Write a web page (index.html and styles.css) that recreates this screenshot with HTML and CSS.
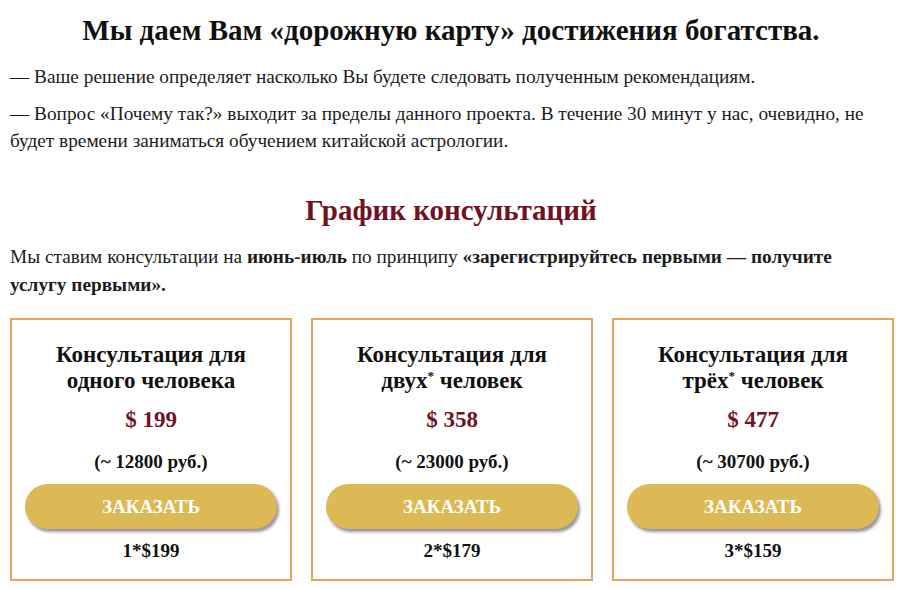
FILE: index.html
```html
<!DOCTYPE html>
<html lang="ru">
<head>
<meta charset="utf-8">
<title>График консультаций</title>
<link rel="stylesheet" href="styles.css">
</head>
<body>
<main class="page">
  <h1 class="main-title">Мы даем Вам «дорожную карту» достижения богатства.</h1>
  <p class="text">— Ваше решение определяет насколько Вы будете следовать полученным рекомендациям.</p>
  <p class="text">— Вопрос «Почему так?» выходит за пределы данного проекта. В течение 30 минут у нас, очевидно, не будет времени заниматься обучением китайской астрологии.</p>

  <h2 class="section-title">График консультаций</h2>
  <p class="text intro">Мы ставим консультации на <b>июнь-июль</b> по принципу <b>«зарегистрируйтесь первыми — получите услугу первыми».</b></p>

  <div class="cards">
    <div class="card">
      <h3 class="card-title">Консультация для одного человека</h3>
      <div class="price">$ 199</div>
      <div class="rub">(~ 12800 руб.)</div>
      <a class="btn" href="#">ЗАКАЗАТЬ</a>
      <div class="per">1*$199</div>
    </div>
    <div class="card">
      <h3 class="card-title">Консультация для двух<sup>*</sup> человек</h3>
      <div class="price">$ 358</div>
      <div class="rub">(~ 23000 руб.)</div>
      <a class="btn" href="#">ЗАКАЗАТЬ</a>
      <div class="per">2*$179</div>
    </div>
    <div class="card">
      <h3 class="card-title">Консультация для трёх<sup>*</sup> человек</h3>
      <div class="price">$ 477</div>
      <div class="rub">(~ 30700 руб.)</div>
      <a class="btn" href="#">ЗАКАЗАТЬ</a>
      <div class="per">3*$159</div>
    </div>
  </div>
</main>
</body>
</html>
```

FILE: styles.css
```css
* { box-sizing: border-box; }
html, body { margin: 0; padding: 0; background: #fff; }
body {
  font-family: "Liberation Serif", "Times New Roman", serif;
  color: #1c1c1c;
}
.page {
  padding: 12px 8px 0 10px;
}
.main-title {
  margin: 0 0 15px;
  text-align: center;
  font-size: 29px;
  line-height: 36px;
  font-weight: bold;
  color: #111;
}
.text {
  margin: 0 0 10px;
  font-size: 19.3px;
  line-height: 27px;
}
.section-title {
  margin: 38px 0 15px;
  text-align: center;
  font-size: 29px;
  line-height: 36px;
  font-weight: bold;
  color: #711222;
}
.intro { line-height: 28px; margin-bottom: 19px; }
.cards {
  display: flex;
  gap: 19px;
}
.card {
  flex: 1;
  border: 2px solid #e3a45a;
  padding: 22px 13px 17px;
  text-align: center;
  display: flex;
  flex-direction: column;
  align-items: center;
}
.card-title {
  margin: 0;
  font-size: 23px;
  line-height: 26px;
  font-weight: bold;
  color: #111;
  max-width: 230px;
}
.card-title sup {
  font-size: 13px;
  line-height: 0;
  vertical-align: 8px;
}
.price {
  margin-top: 13px;
  font-size: 23px;
  line-height: 26px;
  font-weight: bold;
  color: #711222;
}
.rub {
  margin-top: 18px;
  font-size: 19px;
  line-height: 22px;
  font-weight: bold;
  color: #111;
}
.btn {
  margin-top: 11px;
  display: block;
  width: 252px;
  height: 45px;
  line-height: 45px;
  border-radius: 23px;
  background: #dcb954;
  color: #fff;
  text-decoration: none;
  font-size: 19px;
  font-weight: bold;
  box-shadow: 2px 3px 3px rgba(60, 60, 90, 0.55);
}
.per {
  margin-top: 11px;
  font-size: 19px;
  line-height: 22px;
  font-weight: bold;
  color: #111;
}
```
